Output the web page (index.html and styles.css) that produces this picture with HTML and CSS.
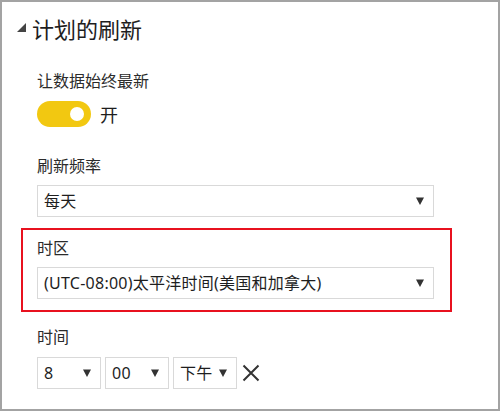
FILE: index.html
```html
<!DOCTYPE html>
<html lang="zh-CN">
<head>
<meta charset="utf-8">
<title>计划的刷新</title>
<link rel="stylesheet" href="styles.css">
</head>
<body>
<div class="panel">
  <div class="header">
    <svg class="caret" width="9" height="9" viewBox="0 0 9 9"><polygon points="9,0 9,9 0,9" fill="#444"/></svg>
    <h2 class="title">计划的刷新</h2>
  </div>
  <div class="content">
    <div class="field field-keep">
      <div class="label">让数据始终最新</div>
      <div class="toggle-row">
        <span class="toggle"><span class="knob"></span></span>
        <span class="toggle-text">开</span>
      </div>
    </div>
    <div class="field field-freq">
      <div class="label">刷新频率</div>
      <div class="select select-wide">
        <span class="value">每天</span>
        <svg class="arrow" width="8" height="8" viewBox="0 0 8 8"><polygon points="0,0.5 8,0.5 4,8" fill="#333"/></svg>
      </div>
    </div>
    <div class="field highlight">
      <div class="label">时区</div>
      <div class="select select-wide">
        <span class="value">(UTC-08:00)太平洋时间(美国和加拿大)</span>
        <svg class="arrow" width="8" height="8" viewBox="0 0 8 8"><polygon points="0,0.5 8,0.5 4,8" fill="#333"/></svg>
      </div>
    </div>
    <div class="field field-time">
      <div class="label">时间</div>
      <div class="time-row">
        <div class="select select-small">
          <span class="value">8</span>
          <svg class="arrow" width="8" height="8" viewBox="0 0 8 8"><polygon points="0,0.5 8,0.5 4,8" fill="#333"/></svg>
        </div>
        <div class="select select-small">
          <span class="value">00</span>
          <svg class="arrow" width="8" height="8" viewBox="0 0 8 8"><polygon points="0,0.5 8,0.5 4,8" fill="#333"/></svg>
        </div>
        <div class="select select-small">
          <span class="value">下午</span>
          <svg class="arrow" width="8" height="8" viewBox="0 0 8 8"><polygon points="0,0.5 8,0.5 4,8" fill="#333"/></svg>
        </div>
        <svg class="clear" width="18" height="18" viewBox="0 0 18 18"><path d="M1.5 1.5 L16.5 16.5 M16.5 1.5 L1.5 16.5" stroke="#333" stroke-width="2" fill="none"/></svg>
      </div>
    </div>
  </div>
</div>
</body>
</html>
```

FILE: styles.css
```css
html, body {
  margin: 0;
  padding: 0;
  background: #fff;
}

body {
  font-family: "Noto Sans", "Noto Sans CJK SC", sans-serif;
  color: #222;
}

.panel {
  width: 500px;
  height: 411px;
  box-sizing: border-box;
  border: 2px solid #a3a3a3;
  background: #fff;
}

.header {
  display: flex;
  align-items: center;
  padding: 11px 0 0 15px;
}

.caret {
  display: block;
  margin-right: 6px;
  margin-top: -1px;
}

.title {
  margin: 0;
  font-family: "Noto Sans CJK SC", sans-serif;
  font-weight: normal;
  font-size: 22px;
  line-height: 30px;
  color: #1e1e1e;
}

.content {
  padding-left: 35px;
}

.label {
  font-family: "Noto Sans CJK SC", sans-serif;
  font-size: 16px;
  line-height: 20px;
  color: #2b2b2b;
}

.field-keep {
  margin-top: 27px;
}

.toggle-row {
  display: flex;
  align-items: center;
  margin-top: 11px;
}

.toggle {
  display: flex;
  align-items: center;
  justify-content: flex-end;
  width: 54px;
  height: 26px;
  box-sizing: border-box;
  padding-right: 7px;
  border-radius: 13px;
  background: #f2c811;
}

.knob {
  width: 14px;
  height: 14px;
  border-radius: 50%;
  background: #fff;
}

.toggle-text {
  margin-left: 9px;
  font-family: "Noto Sans CJK SC", sans-serif;
  font-size: 18px;
  line-height: 26px;
  color: #1e1e1e;
}

.field-freq {
  margin-top: 28px;
}

.select {
  display: flex;
  align-items: center;
  justify-content: space-between;
  box-sizing: border-box;
  height: 32px;
  margin-top: 10px;
  padding: 0 9px 0 6px;
  border: 1px solid #d9d9d9;
  background: #fff;
  font-size: 16px;
  line-height: 20px;
  color: #1e1e1e;
}

.value {
  letter-spacing: 0.25px;
}

.select-wide {
  width: 397px;
}

.arrow {
  display: block;
  flex: none;
}

.highlight {
  margin-top: 11px;
  margin-left: -16px;
  width: 431px;
  box-sizing: border-box;
  padding: 7px 16px 11px 14px;
  border: 2px solid #e8111f;
}

.field-time {
  margin-top: 14px;
}

.time-row {
  display: flex;
  align-items: center;
  gap: 4px;
  margin-top: 11px;
}

.time-row .select {
  margin-top: 0;
}

.select-small {
  width: 64px;
}

.clear {
  display: block;
  margin-left: 1px;
}
```
